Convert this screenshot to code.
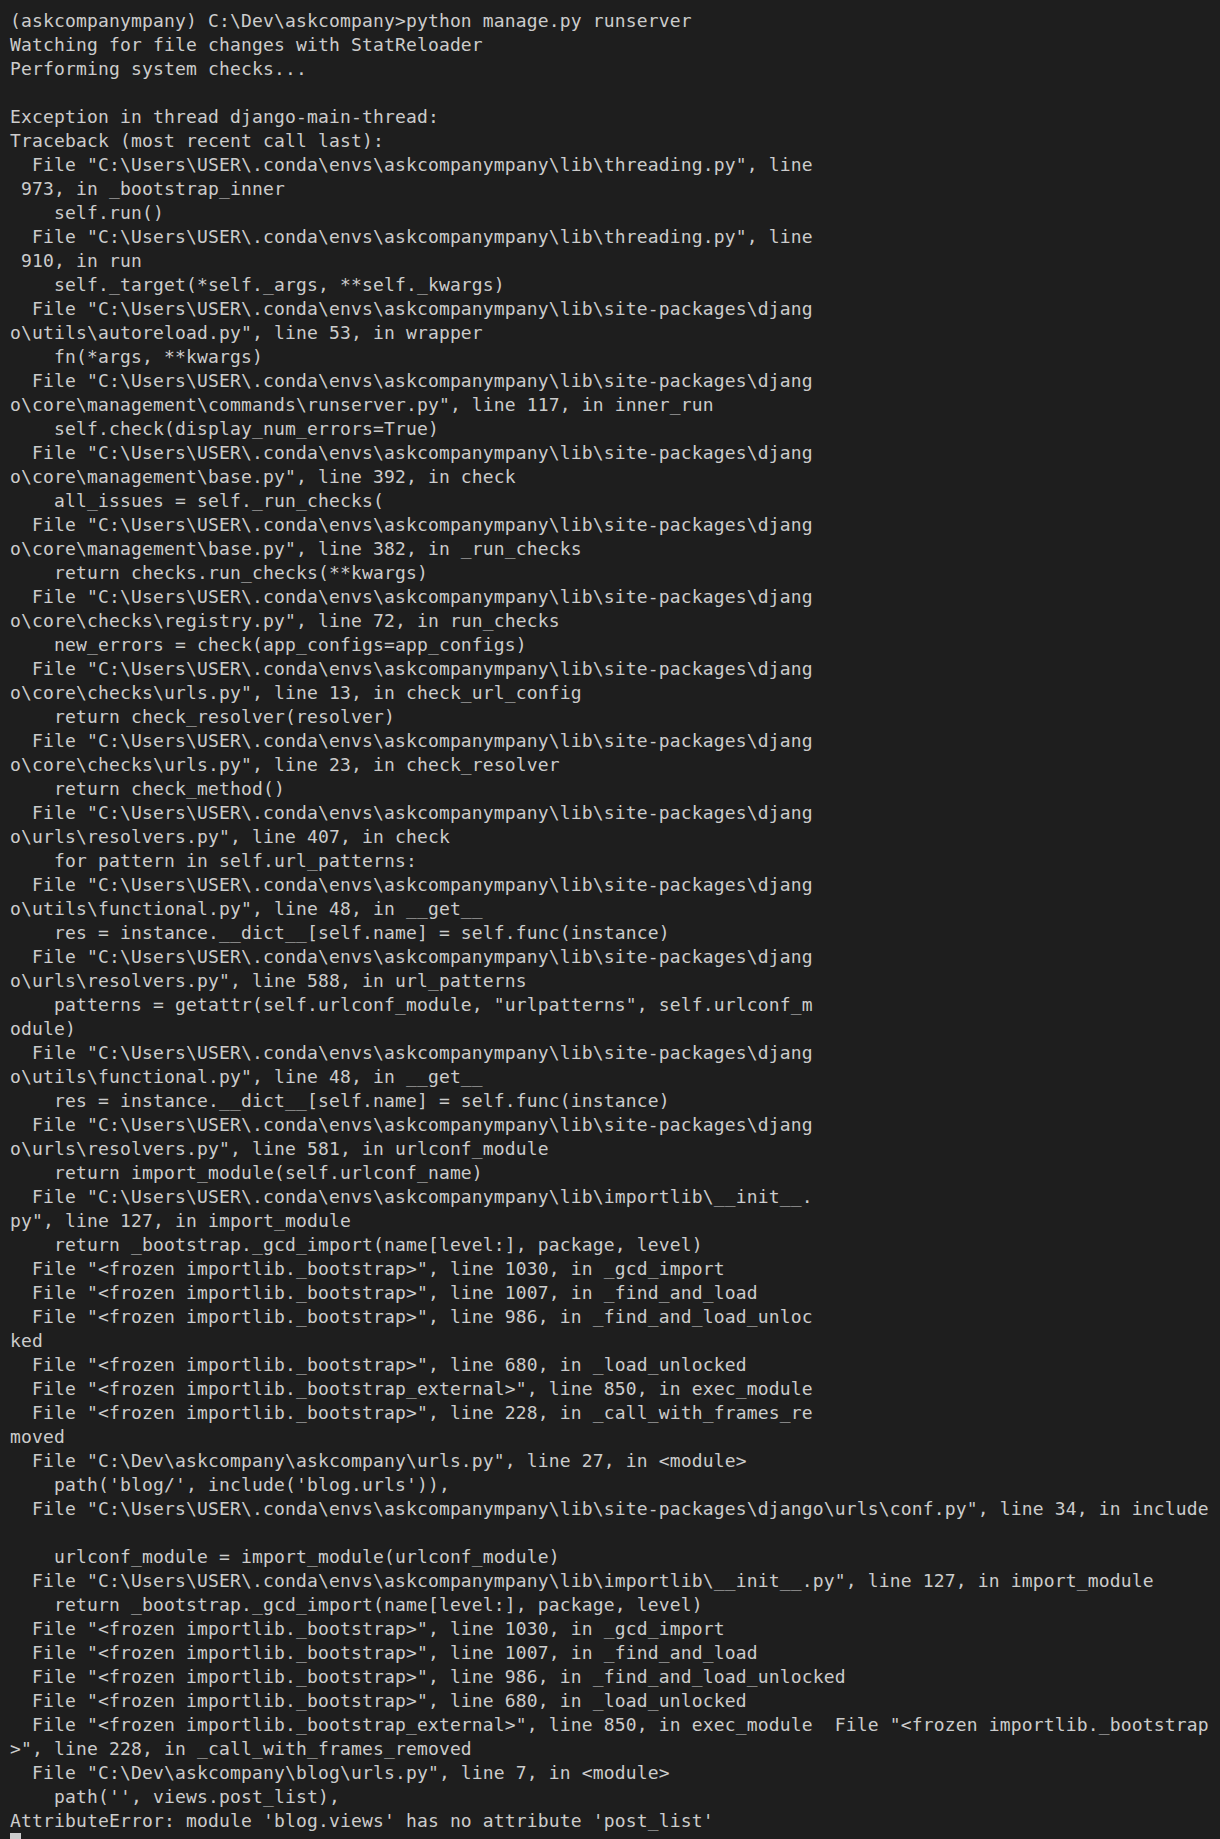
const SITE = 'File "C:\\Users\\USER\\.conda\\envs\\askcompanympany\\lib\\site-packages\\djang';

const lines: string[] = [
  '(askcompanympany) C:\\Dev\\askcompany>python manage.py runserver',
  'Watching for file changes with StatReloader',
  'Performing system checks...',
  '',
  'Exception in thread django-main-thread:',
  'Traceback (most recent call last):',
  '  File "C:\\Users\\USER\\.conda\\envs\\askcompanympany\\lib\\threading.py", line',
  ' 973, in _bootstrap_inner',
  '    self.run()',
  '  File "C:\\Users\\USER\\.conda\\envs\\askcompanympany\\lib\\threading.py", line',
  ' 910, in run',
  '    self._target(*self._args, **self._kwargs)',
  '  ' + SITE,
  'o\\utils\\autoreload.py", line 53, in wrapper',
  '    fn(*args, **kwargs)',
  '  ' + SITE,
  'o\\core\\management\\commands\\runserver.py", line 117, in inner_run',
  '    self.check(display_num_errors=True)',
  '  ' + SITE,
  'o\\core\\management\\base.py", line 392, in check',
  '    all_issues = self._run_checks(',
  '  ' + SITE,
  'o\\core\\management\\base.py", line 382, in _run_checks',
  '    return checks.run_checks(**kwargs)',
  '  ' + SITE,
  'o\\core\\checks\\registry.py", line 72, in run_checks',
  '    new_errors = check(app_configs=app_configs)',
  '  ' + SITE,
  'o\\core\\checks\\urls.py", line 13, in check_url_config',
  '    return check_resolver(resolver)',
  '  ' + SITE,
  'o\\core\\checks\\urls.py", line 23, in check_resolver',
  '    return check_method()',
  '  ' + SITE,
  'o\\urls\\resolvers.py", line 407, in check',
  '    for pattern in self.url_patterns:',
  '  ' + SITE,
  'o\\utils\\functional.py", line 48, in __get__',
  '    res = instance.__dict__[self.name] = self.func(instance)',
  '  ' + SITE,
  'o\\urls\\resolvers.py", line 588, in url_patterns',
  '    patterns = getattr(self.urlconf_module, "urlpatterns", self.urlconf_m',
  'odule)',
  '  ' + SITE,
  'o\\utils\\functional.py", line 48, in __get__',
  '    res = instance.__dict__[self.name] = self.func(instance)',
  '  ' + SITE,
  'o\\urls\\resolvers.py", line 581, in urlconf_module',
  '    return import_module(self.urlconf_name)',
  '  File "C:\\Users\\USER\\.conda\\envs\\askcompanympany\\lib\\importlib\\__init__.',
  'py", line 127, in import_module',
  '    return _bootstrap._gcd_import(name[level:], package, level)',
  '  File "<frozen importlib._bootstrap>", line 1030, in _gcd_import',
  '  File "<frozen importlib._bootstrap>", line 1007, in _find_and_load',
  '  File "<frozen importlib._bootstrap>", line 986, in _find_and_load_unloc',
  'ked',
  '  File "<frozen importlib._bootstrap>", line 680, in _load_unlocked',
  '  File "<frozen importlib._bootstrap_external>", line 850, in exec_module',
  '  File "<frozen importlib._bootstrap>", line 228, in _call_with_frames_re',
  'moved',
  '  File "C:\\Dev\\askcompany\\askcompany\\urls.py", line 27, in <module>',
  "    path('blog/', include('blog.urls')),",
  '  File "C:\\Users\\USER\\.conda\\envs\\askcompanympany\\lib\\site-packages\\django\\urls\\conf.py", line 34, in include',
  '',
  '    urlconf_module = import_module(urlconf_module)',
  '  File "C:\\Users\\USER\\.conda\\envs\\askcompanympany\\lib\\importlib\\__init__.py", line 127, in import_module',
  '    return _bootstrap._gcd_import(name[level:], package, level)',
  '  File "<frozen importlib._bootstrap>", line 1030, in _gcd_import',
  '  File "<frozen importlib._bootstrap>", line 1007, in _find_and_load',
  '  File "<frozen importlib._bootstrap>", line 986, in _find_and_load_unlocked',
  '  File "<frozen importlib._bootstrap>", line 680, in _load_unlocked',
  '  File "<frozen importlib._bootstrap_external>", line 850, in exec_module  File "<frozen importlib._bootstrap',
  '>", line 228, in _call_with_frames_removed',
  '  File "C:\\Dev\\askcompany\\blog\\urls.py", line 7, in <module>',
  "    path('', views.post_list),",
  "AttributeError: module 'blog.views' has no attribute 'post_list'",
];

export default function App() {
  return (
    <div className="h-[1839px] w-[1220px] overflow-hidden bg-[#1e1e1e] pl-[10px] pt-[9px] text-[#cccccc] font-['DejaVu_Sans_Mono',monospace] text-[18px] leading-[24px] tracking-[0.16px]">
      {lines.map((line, i) => (
        <div key={i} className="h-[24px] whitespace-pre">
          {line}
        </div>
      ))}
      {/* cursor */}
      <div className="h-[24px] pt-[0px]">
        <div className="h-[22px] w-[11px] bg-[#cccccc]" />
      </div>
    </div>
  );
}
